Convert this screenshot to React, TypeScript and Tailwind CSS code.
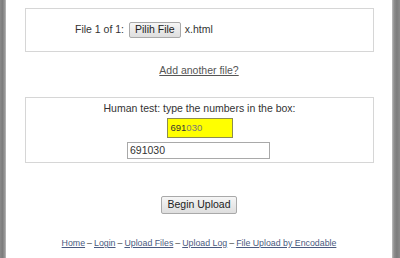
import React from "react";

export default function App() {
  const font = { fontFamily: '"Liberation Sans", Arial, sans-serif' };
  return (
    <div className="flex w-[400px] h-[258px] bg-white overflow-hidden" style={font}>
      <div className="w-[6px] h-full bg-[linear-gradient(to_right,#8a8a8a,#7c7c7c_40%,#9c9c9c_85%,#c8c8c8)]" />
      <div className="flex-1 flex flex-col text-[10.5px] text-[#333]">
        <div className="mt-[8px] ml-[19px] mr-[18px] h-[44px] shrink-0 border border-[#d6d6d6] flex items-center pl-[49px]">
          <span>File 1 of 1:</span>
          <span className="ml-[5px] h-[16px] px-[5px] flex items-center border border-[#a9a9a9] rounded-[2px] bg-[linear-gradient(#f6f6f6,#dedede)] text-[#222]">
            Pilih File
          </span>
          <span className="ml-[4px]">x.html</span>
        </div>
        <div className="h-[45px] shrink-0 pt-[12px] flex justify-center leading-[12px]">
          <span className="underline text-[#555]">Add another file?</span>
        </div>
        <div className="ml-[19px] mr-[18px] h-[66px] shrink-0 border border-[#d6d6d6] flex flex-col items-center">
          <div className="mt-[3px] h-[14px] leading-[14px]">Human test: type the numbers in the box:</div>
          <div className="mt-[3px] w-[66px] h-[20px] bg-[#ffff00] border border-[#8c8c50] flex items-center pl-[3px] text-[9.5px]">
            <span className="text-[#333]">691</span>
            <span className="text-[#777]">030</span>
          </div>
          <div className="mt-[4px] ml-[-2px] w-[143px] h-[17px] border border-[#a9a9a9] flex items-center pl-[2px] text-[#333]">
            691030
          </div>
        </div>
        <div className="mt-[33px] shrink-0 flex justify-center">
          <span className="h-[18px] px-[5px] flex items-center border border-[#a9a9a9] rounded-[2px] bg-[linear-gradient(#f6f6f6,#dedede)] text-[#222]">
            Begin Upload
          </span>
        </div>
        <div className="mt-[23px] shrink-0 flex justify-center text-[8.8px] text-[#444] leading-[12px]">
          <span className="underline text-[#4a5a80]">Home</span>
          <span className="mx-[2px]">–</span>
          <span className="underline text-[#4a5a80]">Login</span>
          <span className="mx-[2px]">–</span>
          <span className="underline text-[#4a5a80]">Upload Files</span>
          <span className="mx-[2px]">–</span>
          <span className="underline text-[#4a5a80]">Upload Log</span>
          <span className="mx-[2px]">–</span>
          <span className="underline text-[#4a5a80]">File Upload by Encodable</span>
        </div>
      </div>
      <div className="w-[8px] h-full bg-[linear-gradient(to_right,#c0c0c0,#8e8e8e_25%,#7c7c7c_60%,#8a8a8a)]" />
    </div>
  );
}
